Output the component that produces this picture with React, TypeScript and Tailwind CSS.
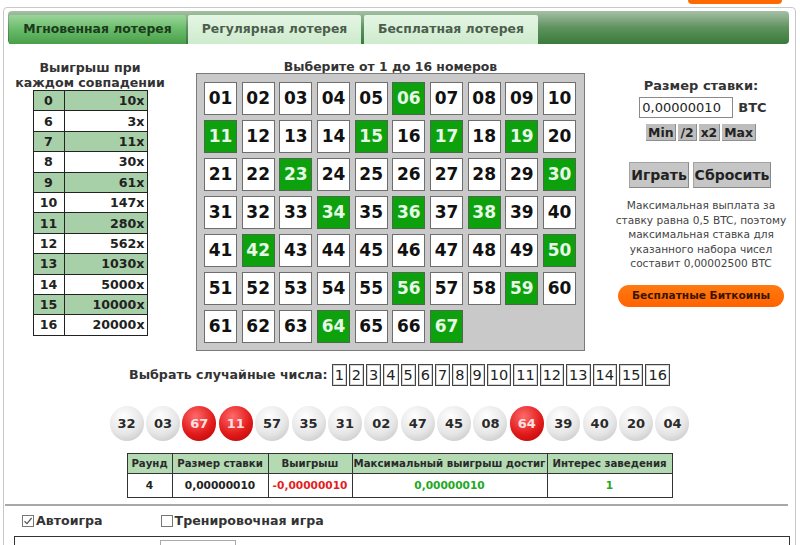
import React from 'react'

const picked = [6, 11, 15, 17, 19, 23, 30, 34, 36, 38, 42, 50, 56, 59, 64, 67]

const payouts = [
  ['0', '10x'],
  ['6', '3x'],
  ['7', '11x'],
  ['8', '30x'],
  ['9', '61x'],
  ['10', '147x'],
  ['11', '280x'],
  ['12', '562x'],
  ['13', '1030x'],
  ['14', '5000x'],
  ['15', '10000x'],
  ['16', '20000x'],
]

const drawn: [string, boolean][] = [
  ['32', false],
  ['03', false],
  ['67', true],
  ['11', true],
  ['57', false],
  ['35', false],
  ['31', false],
  ['02', false],
  ['47', false],
  ['45', false],
  ['08', false],
  ['64', true],
  ['39', false],
  ['40', false],
  ['20', false],
  ['04', false],
]

const pad = (n: number) => (n < 10 ? `0${n}` : `${n}`)

const CheckBox = ({ checked }: { checked?: boolean }) => (
  <span className="inline-flex items-center justify-center w-[12px] h-[12px] border border-[#777] bg-white mr-[2px]">
    {checked && (
      <svg width="10" height="10" viewBox="0 0 10 10" fill="none">
        <path d="M1.5 5.2 L4 7.6 L8.6 2" stroke="#555" strokeWidth="1.2" />
      </svg>
    )}
  </span>
)

export default function App() {
  return (
    <div className="w-[800px] h-[545px] overflow-hidden bg-white text-[#222] font-['DejaVu_Sans',Verdana,sans-serif]">
      {/* bit of the orange button from the header above */}
      <div className="h-[7px] flex justify-end pr-[18px]">
        <div className="w-[94px] h-[4px] rounded-b-[10px] bg-[#ff6a00]" />
      </div>

      <div className="ml-[3px] w-[793px] h-[560px] border border-[#c8c8c8] rounded-[4px] px-[4px] pt-[3px]">
        {/* Tabs */}
        <div className="w-[781px] h-[33px] rounded-[4px] bg-gradient-to-b from-[#a6c0a6] via-[#5f925f] to-[#3a7a3a] flex items-end gap-[2px] pl-[1px]">
          <div className="w-[177px] h-[29px] rounded-t-[2px] bg-gradient-to-b from-[#9ad49a] via-[#68bb68] to-[#4a9e4a] flex items-center justify-center text-[12.4px] font-bold text-[#1c3a1c]">
            Мгновенная лотерея
          </div>
          <div className="w-[173px] h-[29px] rounded-t-[2px] bg-gradient-to-b from-[#e4f6e4] to-[#cdebcd] flex items-center justify-center text-[12.4px] font-bold text-[#4d5d4d]">
            Регулярная лотерея
          </div>
          <div className="w-[174px] h-[29px] ml-[1px] rounded-t-[2px] bg-gradient-to-b from-[#e4f6e4] to-[#cdebcd] flex items-center justify-center text-[12.4px] font-bold text-[#4d5d4d]">
            Бесплатная лотерея
          </div>
        </div>

        {/* Main row */}
        <div className="flex pt-[16px] items-start">
          {/* Payout table */}
          <div className="w-[164px] flex flex-col items-center">
            <div className="text-[12.6px] font-bold leading-[15px] text-center text-[#333]">
              Выигрыш при
              <br />
              каждом совпадении
            </div>
            <table className="w-[115px] border-collapse border border-[#222] text-[12.6px] font-bold">
              <tbody>
                {payouts.map(([m, x], i) => (
                  <tr key={m} className={`h-[20.4px] ${i % 2 === 0 ? 'bg-[#a8d0a8]' : 'bg-white'}`}>
                    <td className="w-[31px] border border-[#222] text-center leading-[19px]">{m}</td>
                    <td className="border border-[#222] text-right pr-[2px] leading-[19px]">{x}</td>
                  </tr>
                ))}
              </tbody>
            </table>
          </div>

          {/* Number grid */}
          <div className="ml-[24px] w-[389px] flex flex-col items-center">
            <div className="text-[12.4px] font-bold leading-[13px] text-[#333]">Выберите от 1 до 16 номеров</div>
            <div className="w-[389px] h-[278px] border border-[#7a7a7a] bg-[#c9c9c9] pl-[7px] pt-[8px]">
              <div className="grid grid-cols-10 w-[372px] gap-x-[4.66px] gap-y-[5px]">
                {Array.from({ length: 67 }, (_, i) => i + 1).map((n) => {
                  const on = picked.includes(n)
                  return (
                    <div
                      key={n}
                      className={`h-[33px] flex items-center justify-center border text-[17px] font-bold ${
                        on
                          ? 'bg-[#0ea10e] border-[#4a6a4a] text-[#e6f8e6]'
                          : 'bg-white border-[#6e6e6e] text-[#111]'
                      }`}
                    >
                      {pad(n)}
                    </div>
                  )
                })}
              </div>
            </div>
          </div>

          {/* Bet controls */}
          <div className="ml-[31px] w-[170px] flex flex-col items-center">
            <div className="mt-[18px] text-[13px] font-bold leading-[15px] text-[#333]">Размер ставки:</div>
            <div className="mt-[4px] flex items-center gap-[5px] pl-[4px]">
              <div className="w-[94px] h-[21px] border border-[#8a8a8a] bg-white text-[13px] leading-[19px] pl-[2px] text-[#222]">
                0,00000010
              </div>
              <span className="text-[13px] font-bold text-[#333]">BTC</span>
            </div>
            <div className="mt-[6px] flex gap-[2px] text-[12.4px] font-bold text-[#222]">
              <span className="h-[17px] px-[2px] leading-[17px] bg-[#bdbdbd] border-r border-b border-[#8e8e8e]">Min</span>
              <span className="h-[17px] px-[2px] leading-[17px] bg-[#bdbdbd] border-r border-b border-[#8e8e8e]">/2</span>
              <span className="h-[17px] px-[2px] leading-[17px] bg-[#bdbdbd] border-r border-b border-[#8e8e8e]">x2</span>
              <span className="h-[17px] px-[2px] leading-[17px] bg-[#bdbdbd] border-r border-b border-[#8e8e8e]">Max</span>
            </div>
            <div className="mt-[21px] flex gap-[4px] text-[14px] font-bold text-[#222] -ml-[2px]">
              <span className="h-[26px] w-[60px] flex items-center justify-center bg-[#c6c6c6] border border-[#a4a4a4] border-b-[#888] border-r-[#888]">
                Играть
              </span>
              <span className="h-[26px] w-[78px] flex items-center justify-center bg-[#c6c6c6] border border-[#a4a4a4] border-b-[#888] border-r-[#888]">
                Сбросить
              </span>
            </div>
            <p className="mt-[10px] text-center text-[10.6px] leading-[14.5px] text-[#444] whitespace-nowrap">
              Максимальная выплата за
              <br />
              ставку равна 0,5 BTC, поэтому
              <br />
              максимальная ставка для
              <br />
              указанного набора чисел
              <br />
              составит 0,00002500 BTC
            </p>
            <div className="mt-[14px] w-[166px] h-[22px] rounded-full bg-gradient-to-b from-[#ff7a10] to-[#ff6200] flex items-center justify-center text-[10.6px] font-bold text-[#3a1500]">
              Бесплатные Биткоины
            </div>
          </div>
        </div>

        {/* Random pick */}
        <div className="mt-[13px] flex items-center justify-center">
          <span className="text-[12.6px] font-bold text-[#333] mr-[4px]">Выбрать случайные числа:</span>
          <div className="flex gap-[2px]">
            {Array.from({ length: 16 }, (_, i) => i + 1).map((n) => (
              <span
                key={n}
                className="h-[22px] px-[2px] border border-[#444] outline outline-1 outline-[#d4d4d4] -outline-offset-2 text-[14.5px] leading-[20px] text-[#222]"
              >
                {n}
              </span>
            ))}
          </div>
        </div>

        {/* Drawn balls */}
        <div className="mt-[20px] flex justify-center gap-[2.4px]">
          {drawn.map(([n, red], i) => (
            <div
              key={i}
              className={`w-[34px] h-[35px] rounded-full flex items-center justify-center text-[13px] font-bold ${
                red
                  ? 'bg-[radial-gradient(circle_at_40%_30%,#ff6a6a,#e21c1c_55%,#b30000)] text-[#ffe0e0]'
                  : 'bg-[radial-gradient(circle_at_40%_30%,#ffffff,#e6e6e6_55%,#bdbdbd)] text-[#2a2a2a]'
              }`}
            >
              {n}
            </div>
          ))}
        </div>

        {/* Stats */}
        <div className="mt-[12px] flex justify-center">
          <table className="w-[545px] table-fixed border-collapse border border-[#333] text-[10.2px] font-bold whitespace-nowrap">
            <colgroup>
              <col className="w-[45px]" />
              <col className="w-[96px]" />
              <col className="w-[84px]" />
              <col className="w-[195px]" />
              <col className="w-[125px]" />
            </colgroup>
            <thead>
              <tr className="h-[20px] bg-[#b4dab4] text-[#2a2a2a]">
                <th className="border border-[#333] font-bold p-0">Раунд</th>
                <th className="border border-[#333] font-bold p-0">Размер ставки</th>
                <th className="border border-[#333] font-bold p-0">Выигрыш</th>
                <th className="border border-[#333] font-bold p-0">Максимальный выигрыш достиг</th>
                <th className="border border-[#333] font-bold p-0">Интерес заведения</th>
              </tr>
            </thead>
            <tbody>
              <tr className="h-[24px] text-center text-[10.6px]">
                <td className="border border-[#333]">4</td>
                <td className="border border-[#333]">0,00000010</td>
                <td className="border border-[#333] text-[#e41e1e]">-0,00000010</td>
                <td className="border border-[#333] text-[#22a822]">0,00000010</td>
                <td className="border border-[#333] text-[#22a822]">1</td>
              </tr>
            </tbody>
          </table>
        </div>

        <div className="mt-[6px] -ml-[3px] w-[783px] h-[2px] bg-[#a8a8a8]" />

        {/* Options */}
        <div className="flex items-center h-[30px] text-[12.6px] font-bold text-[#333]">
          <label className="ml-[14px] flex items-center">
            <CheckBox checked />
            Автоигра
          </label>
          <label className="ml-[58px] flex items-center">
            <CheckBox />
            Тренировочная игра
          </label>
        </div>

        <div className="ml-[6px] w-[776px] h-[40px] border border-[#333] border-b-0 pl-[145px] pt-[3px]">
          <div className="w-[76px] h-[20px] border border-[#aaa] border-b-0" />
        </div>
      </div>
    </div>
  )
}
